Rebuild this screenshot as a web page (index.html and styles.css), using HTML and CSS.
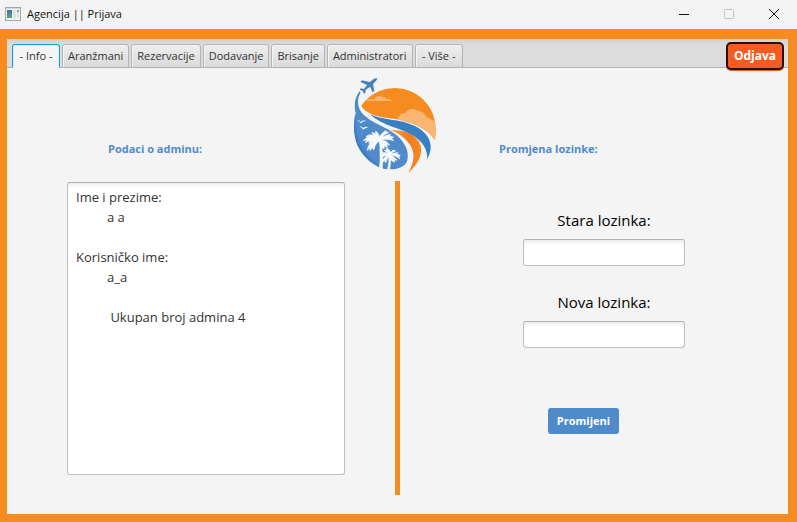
FILE: index.html
```html
<!DOCTYPE html>
<html lang="hr">
<head>
<meta charset="utf-8">
<title>Agencija || Prijava</title>
<link rel="stylesheet" href="styles.css">
</head>
<body>
<header class="titlebar">
  <svg class="app-icon" width="16" height="14" viewBox="0 0 16 14" aria-hidden="true">
    <defs><linearGradient id="pane" x1="0" y1="0" x2="0" y2="1"><stop offset="0" stop-color="#3f6fae"/><stop offset="1" stop-color="#5aa57c"/></linearGradient></defs>
    <rect x=".5" y=".5" width="15" height="13" fill="#f4f4f4" stroke="#a2a7a9"/>
    <rect x="1" y="1" width="14" height="1" fill="#d2d6d8"/>
    <rect x="2" y="3" width="5" height="8" fill="url(#pane)"/>
    <rect x="8" y="3" width="3" height="8" fill="#dde1e2"/>
    <rect x="12" y="3" width="2" height="2" fill="#79b28c"/>
    <rect x="12" y="5" width="2" height="6" fill="#dde1e2"/>
  </svg>
  <span class="window-title">Agencija || Prijava</span>
  <div class="window-controls">
    <button class="window-button" aria-label="Minimiziraj"><svg width="12" height="12" viewBox="0 0 12 12"><path d="M1 6.5h10" stroke="#111"/></svg></button>
    <button class="window-button" aria-label="Maksimiziraj" disabled><svg width="12" height="12" viewBox="0 0 12 12"><rect x="1.500" y="1.500" width="9" height="9" rx="1" fill="none" stroke="#c3c3c3"/></svg></button>
    <button class="window-button" aria-label="Zatvori"><svg width="12" height="12" viewBox="0 0 12 12"><path d="M1 1l10 10M11 1L1 11" stroke="#111"/></svg></button>
  </div>
</header>
<main class="frame">
  <div class="tabbar">
    <div class="tabs" role="tablist">
      <button class="tab tab-active" role="tab" aria-selected="true">- Info -</button>
      <button class="tab" role="tab">Aranžmani</button>
      <button class="tab" role="tab">Rezervacije</button>
      <button class="tab" role="tab">Dodavanje</button>
      <button class="tab" role="tab">Brisanje</button>
      <button class="tab" role="tab">Administratori</button>
      <button class="tab" role="tab">- Više -</button>
    </div>
    <button class="logout">Odjava</button>
  </div>
  <div class="panel">
    <section class="info">
      <h2 class="heading"><label for="admin-data">Podaci o adminu:</label></h2>
      <textarea id="admin-data" class="admin-data" readonly>Ime i prezime:
&#9;a a

Korisničko ime:
&#9;a_a

&#9; Ukupan broj admina 4</textarea>
    </section>
    <div class="middle">
      <svg class="logo" width="104" height="103" viewBox="0 0 312 309" aria-hidden="true">
        <defs>
          <clipPath id="sky"><path d="M43 93C70 35 190 35 242 96C272 130 276 170 270 211C252 177 190 151 135 145C82 139 49 124 43 93Z"/></clipPath>
          <linearGradient id="lane"><stop offset="0" stop-color="#f4a148"/><stop offset=".6" stop-color="#f17a20"/><stop offset="1" stop-color="#f68b22"/></linearGradient>
        </defs>
        <g clip-path="url(#sky)">
          <circle cx="150" cy="177" r="123" fill="#f68b1f"/>
          <path d="M58 93C68 87 79 89 88 88C92 77 105 76 111 81C119 79 123 85 124 88C132 85 139 89 141 93Z" fill="#fbb572"/>
          <path d="M155 155C158 137 170 128 181 130C188 114 211 113 220 124C234 121 239 134 245 142C257 142 258 153 264 152L275 143V220Z" fill="#fbb572"/>
        </g>
        <path d="M43 64C28 86 27 108 32 130C22 158 26 201 47 235C65 265 86 290 120 296C146 302 181 295 187 271C195 240 173 208 147 190C118 168 62 152 45 120C37 101 37 83 47 68Z" fill="#4f8bcb"/>
        <path d="M36 132C29 164 33 207 57 240C77 267 95 286 129 298C99 296 65 272 46 242C24 210 22 160 36 132Z" fill="#3d7fc4"/>
        <path d="M74 132C117 153 160 145 204 166C241 181 275 217 247 268C248 235 230 214 207 199C165 171 115 170 74 132Z" fill="#397fc4"/>
        <path d="M136 180C176 179 205 190 222 215C238 242 224 279 190 308C211 272 209 244 194 223C179 203 162 190 136 180Z" fill="url(#lane)"/>
        <path d="M96 25C91 23 84 27 78 34L74 36L51 31L46 36L66 45L57 57L47 55L44 59L53 63L57 71L61 69L62 60L75 50L83 67L88 63L84 43L89 37C95 31 98 27 96 25Z" fill="#4382bb"/>
        <path d="M35 150Q43 150 47 156Q54 149 64 153Q53 153 48 160Q43 153 35 150ZM43 168Q51 169 54 174Q62 168 70 172Q60 173 55 179Q50 173 43 168Z" fill="#fff"/>
        <g fill="#f7f9fb" stroke="#f7f9fb" stroke-width="2">
          <path d="M100 203Q107 224 105 246Q107 274 103 296L112 298Q114 260 111 235Q110 215 106 203Z"/>
          <path d="M102 207C88 194 74 190 63 200L68 200L55 212L66 209L61 218L73 212L72 221L84 212L98 210C81 212 70 221 67 241L74 233L75 242L82 233L86 240L91 226L101 212C103 222 109 231 117 237L118 227L127 233L125 222L134 226L125 215L108 208C122 210 134 207 145 212L140 203L147 202L134 198L137 193L124 196L110 202C116 195 123 190 131 188L120 182L106 196L102 202C103 194 98 187 92 184L92 191L80 187L86 195Z"/>
          <path d="M132 255Q133 277 128 298L134 298Q138 277 136 256Z"/>
          <path d="M131 254C122 245 110 246 105 255L112 254L107 263L118 258L129 257C118 260 110 269 111 279L118 271L122 278L127 266L133 259C136 270 142 276 149 276L148 269L156 271L149 263L139 257C149 256 156 260 164 267L162 258L166 256L155 252L159 248L149 249L139 252C143 246 147 244 152 243L144 240L136 248C136 241 131 236 124 235L126 241L118 241L127 249Z"/>
        </g>
      </svg>
      <div class="divider"></div>
    </div>
    <section class="password">
      <h2 class="heading heading-right">Promjena lozinke:</h2>
      <form class="password-form" onsubmit="return false">
        <label for="old-password">Stara lozinka:</label>
        <input id="old-password" type="password">
        <label for="new-password">Nova lozinka:</label>
        <input id="new-password" type="password">
        <button class="submit">Promijeni</button>
      </form>
    </section>
  </div>
</main>
</body>
</html>
```
FILE: styles.css
```css
* { box-sizing: border-box; }

body {
  margin: 0;
  min-height: 100vh;
  display: flex;
  flex-direction: column;
  background: #f4f4f4;
  color: #333;
  font: 11px/16px "Open Sans", "Noto Sans", sans-serif;
}

button, input, textarea { font: inherit; color: inherit; }
button { padding: 0; border: 0; }

.titlebar {
  display: flex;
  align-items: center;
  height: 29px;
  padding: 0 1px 2px 5px;
  gap: 6px;
  background: #f3f3f3;
  color: #111;
}

.window-controls { display: flex; margin-left: auto; }
.window-button {
  display: grid;
  place-items: center;
  width: 45px;
  height: 27px;
  background: none;
}

.frame {
  flex: 1;
  display: flex;
  flex-direction: column;
  border: solid #f68b1f;
  border-width: 10px 9px 8px 7px;
}

.tabbar {
  display: flex;
  align-items: flex-end;
  justify-content: space-between;
  height: 29px;
  padding: 0 4px 0 5px;
  background: linear-gradient(#d0d0d0, #dcdcdc 6px);
  border-bottom: 1px solid #b3b3b3;
}

.tabs { display: flex; gap: 2px; margin-bottom: -1px; }
.tab {
  height: 24px;
  min-width: 48px;
  padding: 0 5px;
  border: 1px solid #b3b3b3;
  border-radius: 3px 3px 0 0;
  background: linear-gradient(#eee, #dadada);
  box-shadow: inset 1px 1px #f4f4f4;
  white-space: nowrap;
}
.tab-active {
  border-color: #1b9dc9;
  border-bottom-color: #f4f4f4;
  background: #f4f4f4;
  box-shadow: inset 1px 1px #d9edf4, inset -1px 0 #d9edf4;
}

.logout {
  height: 28px;
  width: 58px;
  margin-bottom: -3px;
  border: 2px solid #2b0d05;
  border-radius: 5px;
  background: #f65b22;
  box-shadow: 0 1px #f65b22;
  color: #fff;
  font-size: 12px;
  font-weight: 700;
}

.panel {
  flex: 1;
  display: grid;
  grid-template-columns: 338fr 104fr 339fr;
}

.heading {
  margin: 0;
  padding: 73px 0 25px 101px;
  color: #4f8bca;
  font-size: 11px;
  line-height: 16px;
  font-weight: 700;
}
.heading-right { padding-left: 50px; }

.info { display: flex; flex-direction: column; padding-bottom: 39px; }
.admin-data {
  flex: 1;
  margin-left: 60px;
  padding: 4px 8px;
  border: 1px solid #c0c0c0;
  border-top-color: #b0b0b0;
  border-radius: 3px;
  background: linear-gradient(#ededed, #fff 5px);
  font-size: 13px;
  line-height: 20px;
  tab-size: 31px;
  resize: none;
  outline: 0;
}

.middle {
  display: flex;
  flex-direction: column;
  align-items: center;
  gap: 8px;
  padding: 2px 0 19px;
}
.divider { flex: 1; width: 5px; background: #f68b1f; }

.password-form {
  display: flex;
  flex-direction: column;
  align-items: center;
  padding: 28px 29px 0 0;
}
.password-form label {
  margin-bottom: 9px;
  color: #000;
  font-size: 15px;
  line-height: 20px;
}
.password-form input {
  width: 162px;
  height: 27px;
  margin-bottom: 26px;
  padding: 0 7px;
  border: 1px solid #c0c0c0;
  border-top-color: #b0b0b0;
  border-radius: 3px;
  background: linear-gradient(#ededed, #fff 5px);
}
.submit {
  width: 71px;
  height: 26px;
  margin-top: 34px;
  margin-right: 41px;
  border-radius: 3px;
  background: #4f8bca;
  color: #fff;
  font-weight: 700;
}
```
